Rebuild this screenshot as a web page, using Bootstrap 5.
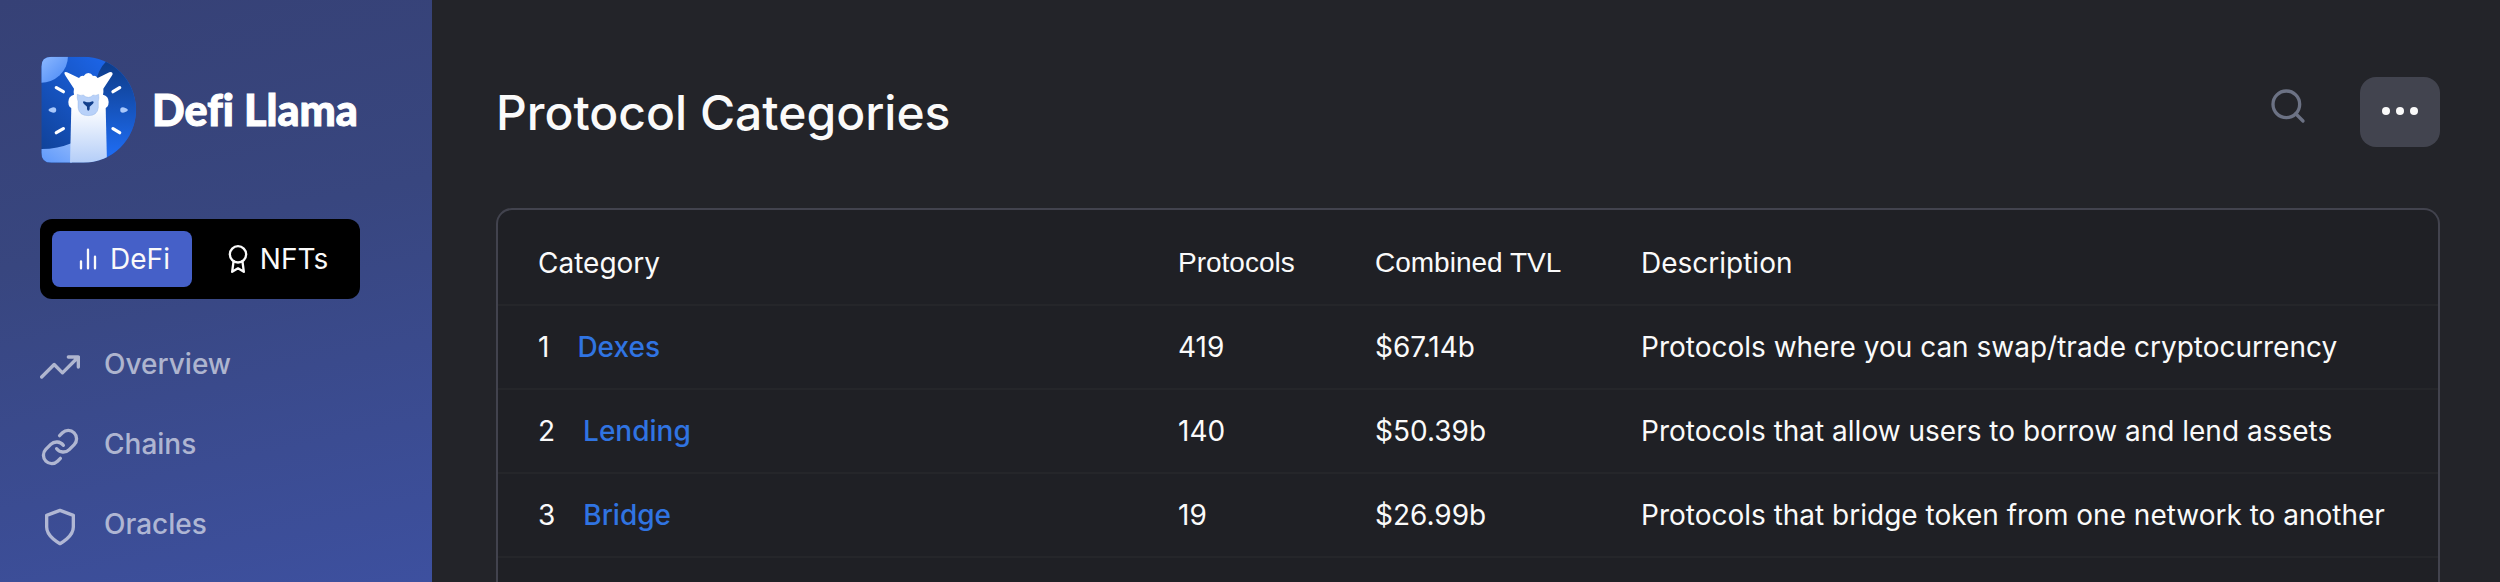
<!DOCTYPE html>
<html lang="en">
<head>
<meta charset="utf-8">
<meta name="viewport" content="width=device-width, initial-scale=1">
<title>Protocol Categories - Defi Llama</title>
<link rel="stylesheet" href="https://cdn.jsdelivr.net/npm/bootstrap@5.3.0/dist/css/bootstrap.min.css">
<style>
  body { background: #232429; color: #fafafa; font-family: Inter, sans-serif; font-size: 28px; line-height: 34px; }
  .sidebar { width: 432px; padding: 56px 40px 0; background: linear-gradient(168deg, #364176 0%, #38467f 40%, #3d509f 100%); }
  .brand { gap: 16px; color: #fff; margin-bottom: 56px; }
  .brand:hover { color: #fff; }
  .brand-name { font-family: Lato, sans-serif; font-weight: 900; font-size: 43px; line-height: 48px; font-variant-ligatures: none; -webkit-text-stroke: 1px #fff; }
  .switcher { width: 320px; padding: 12px; gap: 12px; border-radius: 12px; background: #000; margin-bottom: 48px; }
  .switcher .btn { display: flex; align-items: center; justify-content: center; gap: 8px; height: 56px; padding: 0 16px; border: 0; border-radius: 8px; color: #fafafa; font-size: 28px; font-weight: 400; line-height: 34px; flex: 1 1 auto; }
  .switcher .btn.active { background: #4560c8; color: #fafafa; flex: 0 0 140px; }
  .side-links { gap: 40px; }
  .side-links .nav-link { display: flex; align-items: flex-start; gap: 24px; padding: 0; color: rgba(255, 255, 255, .6); font-weight: 500; }
  .line-icon { fill: none; stroke: currentColor; stroke-width: 2; stroke-linecap: round; stroke-linejoin: round; flex: none; }
  .content { padding: 77px 60px 0 64px; min-width: 0; }
  .page-head { margin-bottom: 61px; }
  .page-head h1 { font-size: 48px; line-height: 60px; padding-top: 2px; font-weight: 500; }
  .search-btn { padding: 0 0 12px; margin-right: 52px; border: 0; color: #6c7284; line-height: 0; }
  .more-btn { width: 80px; height: 70px; padding: 0; border: 0; border-radius: 16px; background: #42444f; color: #fafafa; line-height: 0; }
  .panel { border: 2px solid #42434e; border-bottom: 0; border-radius: 16px 16px 0 0; background: #1f2025; padding-top: 11px; }
  .panel table { --bs-table-bg: transparent; --bs-table-color: #fafafa; color: #fafafa; table-layout: fixed; margin: 0; }
  .panel th, .panel td { height: 84px; padding: 0 0 0 24px; border-bottom: 2px solid #25262a; vertical-align: middle; font-weight: 400; white-space: nowrap; }
  .panel tr > :first-child { padding-left: 40px; }
  .col-count { width: 197px; }
  .col-tvl { width: 266px; }
  .col-about { width: 821px; }
  .sort-btn { display: block; padding: 0; border: 0; color: #fafafa; font-family: "Liberation Sans", sans-serif; font-size: 28px; line-height: 34px; }
  .rank { margin-right: 28px; }
  .panel a { color: #3074e2; font-weight: 500; text-decoration: none; }
</style>
</head>
<body>
<div class="d-flex min-vh-100">
  <aside class="sidebar flex-shrink-0">
    <a href="#" class="brand d-flex align-items-center text-decoration-none">
      <svg width="96" height="107" viewBox="60 48 288 321" aria-hidden="true">
        <defs>
          <clipPath id="dShape"><path d="M94 50H190A158 159 0 0 1 190 368H94Q64 368 64 338V80Q64 50 94 50Z"/></clipPath>
          <linearGradient id="gLeft" x1="0" y1="1" x2="1" y2="0"><stop offset="0" stop-color="#0f3f92"/><stop offset="1" stop-color="#1f6dfa"/></linearGradient>
          <linearGradient id="gRight" x1="0" y1="0" x2="0" y2="1"><stop offset="0" stop-color="#0d3b86"/><stop offset="1" stop-color="#2070fb"/></linearGradient>
          <linearGradient id="gPale" x1="0" y1="0" x2="1" y2="1"><stop offset="0" stop-color="#8fbaff"/><stop offset="1" stop-color="#4787f5"/></linearGradient>
          <linearGradient id="gFoot" x1="0" y1="1" x2="1" y2="0"><stop offset="0" stop-color="#5c97fb"/><stop offset="1" stop-color="#8bb5fc"/></linearGradient>
          <linearGradient id="gNeck" x1="0" y1="0" x2="0" y2="1"><stop offset="0" stop-color="#fff"/><stop offset="1" stop-color="#b3cdf8"/></linearGradient>
        </defs>
        <g clip-path="url(#dShape)">
          <path d="M60 48H350V370H60Z" fill="url(#gLeft)"/>
          <path d="M262 60Q230 92 225 140L250 370H350V60Z" fill="url(#gRight)"/>
          <path d="M60 48H144A80 80 0 0 1 60 128Z" fill="url(#gPale)"/>
          <path d="M60 327Q110 328 156 309V370H60Z" fill="url(#gFoot)"/>
          <path d="M154 200H257L261 370H150Z" fill="url(#gNeck)"/>
        </g>
        <path d="M133 99Q134 94 141 97L177 114Q183 106 191 108Q197 99 205 99Q214 99 219 108Q227 106 233 114L268 97Q277 94 278 101Q278 104 275 108L250 146Q251 155 249 164Q266 168 266 186Q266 204 250 206L236 205H174L160 206Q145 204 145 186Q145 168 162 164Q160 155 162 146L137 108Q134 104 133 99Z" fill="#fff"/>
        <path d="M172 163Q181 168 190 165Q197 172 205 172Q213 172 219 165Q228 168 236 163Q238 175 235 184V203Q232 227 205 227Q177 227 174 203V184Q170 174 172 163Z" fill="#b8d1f9" stroke="#83a8de" stroke-width="1"/>
        <path d="M189 186Q190 182 196 185Q205 189 213 185Q219 182 221 186Q221 189 218 192L209 200V207Q208 212 205 212Q202 212 201 207V200L192 192Q189 189 189 186Z" fill="#123f8c"/>
        <path d="M109 143L130 155M299 143L279 155M109 278L130 266M299 278L279 266" stroke="#fff" stroke-width="10" stroke-linecap="round"/>
        <path d="M85 210Q87 206 93 204Q101 199 107 204Q111 210 107 216Q101 221 93 216Q87 214 85 210ZM324 210Q322 206 316 204Q308 199 302 204Q299 210 302 216Q308 221 316 216Q322 214 324 210Z" fill="#a9c8fb"/>
      </svg>
      <span class="brand-name">Defi Llama</span>
    </a>
    <div class="switcher d-flex" role="group" aria-label="Dashboard">
      <button type="button" class="btn active">
        <svg class="line-icon" width="28" height="28" viewBox="0 0 24 24" aria-hidden="true"><path d="M18 20V10M12 20V4M6 20V14"/></svg>DeFi
      </button>
      <button type="button" class="btn">
        <svg class="line-icon" width="28" height="28" viewBox="0 0 24 24" aria-hidden="true"><circle cx="12" cy="8" r="7"/><path d="M8.21 13.89L7 23l5-3 5 3-1.21-9.12"/></svg>NFTs
      </button>
    </div>
    <nav class="side-links nav flex-column">
      <a class="nav-link" href="#">
        <svg class="line-icon" width="40" height="40" viewBox="0 0 24 24" aria-hidden="true"><path d="M23 6l-9.500 9.500-5-5L1 18M17 6h6v6"/></svg>Overview
      </a>
      <a class="nav-link" href="#">
        <svg class="line-icon" width="40" height="40" viewBox="0 0 24 24" aria-hidden="true"><path d="M10 13a5 5 0 0 0 7.540.540l3-3a5 5 0 0 0-7.070-7.070l-1.720 1.710M14 11a5 5 0 0 0-7.540-.540l-3 3a5 5 0 0 0 7.070 7.070l1.710-1.710"/></svg>Chains
      </a>
      <a class="nav-link" href="#">
        <svg class="line-icon" width="40" height="40" viewBox="0 0 24 24" aria-hidden="true"><path d="M12 22s8-4 8-10V5l-8-3-8 3v7c0 6 8 10 8 10z"/></svg>Oracles
      </a>
    </nav>
  </aside>

  <main class="content d-flex flex-column flex-grow-1">
    <header class="page-head d-flex align-items-center">
      <h1 class="m-0 me-auto">Protocol Categories</h1>
      <button type="button" class="btn search-btn" aria-label="Search">
        <svg class="line-icon" width="40" height="40" viewBox="0 0 24 24" aria-hidden="true"><circle cx="11" cy="11" r="8"/><path d="M21 21l-4.350-4.350"/></svg>
      </button>
      <button type="button" class="btn more-btn" aria-label="More">
        <svg width="40" height="10" viewBox="0 0 40 10" fill="currentColor" aria-hidden="true"><circle cx="6" cy="4" r="4"/><circle cx="20" cy="4" r="4"/><circle cx="34" cy="4" r="4"/></svg>
      </button>
    </header>

    <section class="panel flex-grow-1">
      <table class="table">
        <colgroup><col><col class="col-count"><col class="col-tvl"><col class="col-about"></colgroup>
        <thead>
          <tr>
            <th scope="col">Category</th>
            <th scope="col"><button type="button" class="btn sort-btn">Protocols</button></th>
            <th scope="col"><button type="button" class="btn sort-btn">Combined TVL</button></th>
            <th scope="col">Description</th>
          </tr>
        </thead>
        <tbody>
          <tr><td><span class="rank">1</span><a href="#">Dexes</a></td><td>419</td><td>$67.14b</td><td>Protocols where you can swap/trade cryptocurrency</td></tr>
          <tr><td><span class="rank">2</span><a href="#">Lending</a></td><td>140</td><td>$50.39b</td><td>Protocols that allow users to borrow and lend assets</td></tr>
          <tr><td><span class="rank">3</span><a href="#">Bridge</a></td><td>19</td><td>$26.99b</td><td>Protocols that bridge token from one network to another</td></tr>
        </tbody>
      </table>
    </section>
  </main>
</div>
<script src="https://cdn.jsdelivr.net/npm/bootstrap@5.3.0/dist/js/bootstrap.bundle.min.js"></script>
</body>
</html>
